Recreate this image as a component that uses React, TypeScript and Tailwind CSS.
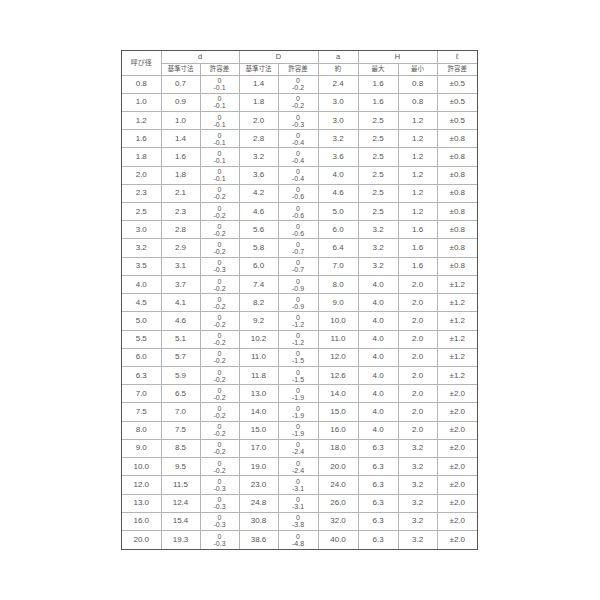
const rows: string[][] = [
  ["0.8", "0.7", "-0.1", "1.4", "-0.2", "2.4", "1.6", "0.8", "±0.5"],
  ["1.0", "0.9", "-0.1", "1.8", "-0.2", "3.0", "1.6", "0.8", "±0.5"],
  ["1.2", "1.0", "-0.1", "2.0", "-0.3", "3.0", "2.5", "1.2", "±0.5"],
  ["1.6", "1.4", "-0.1", "2.8", "-0.4", "3.2", "2.5", "1.2", "±0.8"],
  ["1.8", "1.6", "-0.1", "3.2", "-0.4", "3.6", "2.5", "1.2", "±0.8"],
  ["2.0", "1.8", "-0.1", "3.6", "-0.4", "4.0", "2.5", "1.2", "±0.8"],
  ["2.3", "2.1", "-0.2", "4.2", "-0.6", "4.6", "2.5", "1.2", "±0.8"],
  ["2.5", "2.3", "-0.2", "4.6", "-0.6", "5.0", "2.5", "1.2", "±0.8"],
  ["3.0", "2.8", "-0.2", "5.6", "-0.6", "6.0", "3.2", "1.6", "±0.8"],
  ["3.2", "2.9", "-0.2", "5.8", "-0.7", "6.4", "3.2", "1.6", "±0.8"],
  ["3.5", "3.1", "-0.3", "6.0", "-0.7", "7.0", "3.2", "1.6", "±0.8"],
  ["4.0", "3.7", "-0.2", "7.4", "-0.9", "8.0", "4.0", "2.0", "±1.2"],
  ["4.5", "4.1", "-0.2", "8.2", "-0.9", "9.0", "4.0", "2.0", "±1.2"],
  ["5.0", "4.6", "-0.2", "9.2", "-1.2", "10.0", "4.0", "2.0", "±1.2"],
  ["5.5", "5.1", "-0.2", "10.2", "-1.2", "11.0", "4.0", "2.0", "±1.2"],
  ["6.0", "5.7", "-0.2", "11.0", "-1.5", "12.0", "4.0", "2.0", "±1.2"],
  ["6.3", "5.9", "-0.2", "11.8", "-1.5", "12.6", "4.0", "2.0", "±1.2"],
  ["7.0", "6.5", "-0.2", "13.0", "-1.9", "14.0", "4.0", "2.0", "±2.0"],
  ["7.5", "7.0", "-0.2", "14.0", "-1.9", "15.0", "4.0", "2.0", "±2.0"],
  ["8.0", "7.5", "-0.2", "15.0", "-1.9", "16.0", "4.0", "2.0", "±2.0"],
  ["9.0", "8.5", "-0.2", "17.0", "-2.4", "18.0", "6.3", "3.2", "±2.0"],
  ["10.0", "9.5", "-0.2", "19.0", "-2.4", "20.0", "6.3", "3.2", "±2.0"],
  ["12.0", "11.5", "-0.3", "23.0", "-3.1", "24.0", "6.3", "3.2", "±2.0"],
  ["13.0", "12.4", "-0.3", "24.8", "-3.1", "26.0", "6.3", "3.2", "±2.0"],
  ["16.0", "15.4", "-0.3", "30.8", "-3.8", "32.0", "6.3", "3.2", "±2.0"],
  ["20.0", "19.3", "-0.3", "38.6", "-4.8", "40.0", "6.3", "3.2", "±2.0"],
];

const widths = [39, 39, 39, 39, 40, 40, 40, 39, 40];

const cell = "border border-[#b5b5b5] text-center align-middle p-0";
const head = cell + " text-[6.5px] leading-none font-normal";
const headLatin = cell + " text-[7.5px] leading-none font-normal";

// 公差は上段0、下段マイナス値の2段表示
const Tol = ({ v }: { v: string }) => (
  <div className="flex flex-col items-center leading-[7px] text-[7px]">
    <span>0</span>
    <span>{v}</span>
  </div>
);

export default function App() {
  return (
    <div className="w-[600px] h-[600px] bg-white pt-[50px] pl-[121px] text-[#555] antialiased font-['Liberation_Sans','Noto_Sans_CJK_JP',sans-serif]">
      <div className="w-[357px] border border-[#555]">
        <table className="table-fixed border-collapse border-hidden w-[355px]">
          <colgroup>
            {widths.map((w, i) => (
              <col key={i} style={{ width: w }} />
            ))}
          </colgroup>
          <thead>
            <tr className="h-[12px]">
              <th rowSpan={2} className={cell + " text-[7px] leading-none font-normal"}>呼び径</th>
              <th colSpan={2} className={headLatin}>d</th>
              <th colSpan={2} className={headLatin}>D</th>
              <th className={headLatin}>a</th>
              <th colSpan={2} className={headLatin}>H</th>
              <th className={headLatin}>ℓ</th>
            </tr>
            <tr className="h-[12px]">
              <th className={head}>基準寸法</th>
              <th className={head}>許容差</th>
              <th className={head}>基準寸法</th>
              <th className={head}>許容差</th>
              <th className={head}>約</th>
              <th className={head}>最大</th>
              <th className={head}>最小</th>
              <th className={head}>許容差</th>
            </tr>
          </thead>
          <tbody className="text-[8px] leading-none">
            {rows.map((r) => (
              <tr key={r[0]} className="h-[18.23px]">
                <td className={cell}>{r[0]}</td>
                <td className={cell}>{r[1]}</td>
                <td className={cell}><Tol v={r[2]} /></td>
                <td className={cell}>{r[3]}</td>
                <td className={cell}><Tol v={r[4]} /></td>
                <td className={cell}>{r[5]}</td>
                <td className={cell}>{r[6]}</td>
                <td className={cell}>{r[7]}</td>
                <td className={cell}>{r[8]}</td>
              </tr>
            ))}
          </tbody>
        </table>
      </div>
    </div>
  );
}
